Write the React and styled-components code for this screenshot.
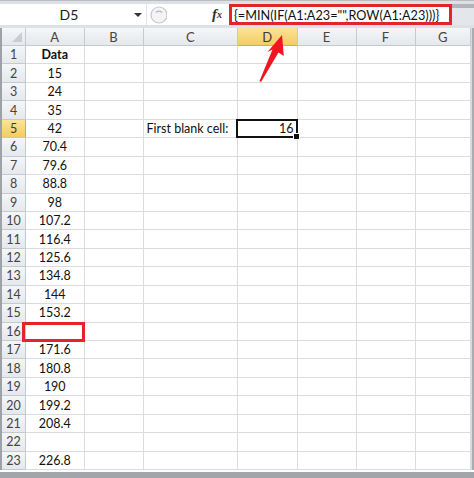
import React from 'react';
import styled, { createGlobalStyle, css } from 'styled-components';

const GlobalStyle = createGlobalStyle`
  body {
    margin: 0;
    background: #ffffff;
    font-family: "Lato", "Liberation Sans", sans-serif;
  }
`;

const COLS = [
  { key: 'A', w: 58.5 },
  { key: 'B', w: 59 },
  { key: 'C', w: 94.5 },
  { key: 'D', w: 59.5 },
  { key: 'E', w: 59 },
  { key: 'F', w: 59 },
  { key: 'G', w: 55.5 },
];

const VALUES = ['Data', '15', '24', '35', '42', '70.4', '79.6', '88.8', '98', '107.2', '116.4', '125.6',
  '134.8', '144', '153.2', '', '171.6', '180.8', '190', '199.2', '208.4', '', '226.8'];

const ROW_H = 18.45;

const Frame = styled.div`
  position: relative;
  width: 474px;
  height: 478px;
  display: flex;
  flex-direction: column;
  overflow: hidden;
  background: #ffffff;
`;

const FormulaBar = styled.div`
  height: 28px;
  display: flex;
  align-items: stretch;
  box-sizing: border-box;
  padding: 3px 0 3px 0;
  background: #dde1e6;
  border-top: 1px solid #b9bdc2;
`;

const NameBox = styled.div`
  width: 146px;
  display: flex;
  align-items: center;
  background: #ffffff;
  border-right: 1px solid #e4e6e9;
  font-size: 14px;
  color: #222;
`;

const NameText = styled.span`
  flex: 1;
  text-align: center;
  padding-left: 4px;
`;

const DropArrow = styled.span`
  width: 0;
  height: 0;
  margin-right: 4px;
  border-left: 4px solid transparent;
  border-right: 4px solid transparent;
  border-top: 4px solid #333;
`;

const Knob = styled.div`
  width: 22px;
  display: flex;
  align-items: center;
  justify-content: center;
  background: #ffffff;
`;

const FxArea = styled.div`
  flex: 0 0 60px;
  display: flex;
  align-items: center;
  justify-content: flex-end;
  padding-right: 7px;
  box-sizing: border-box;
  background: #ffffff;
  font-family: "Liberation Serif", "DejaVu Serif", serif;
  font-style: italic;
  font-weight: bold;
  font-size: 15px;
  color: #333;
  sub {
    font-size: 10px;
    vertical-align: -1px;
    margin-left: 0;
  }
`;

const FormulaInput = styled.div`
  width: 223px;
  box-sizing: border-box;
  display: flex;
  align-items: center;
  padding-left: 2px;
  background: #ffffff;
  border: 3px solid #e3242b;
  font-size: 12.7px;
  color: #111;
  white-space: nowrap;
  overflow: hidden;
`;

const BarRest = styled.div`
  flex: 1;
  background: linear-gradient(#b1b4b8 0 4px, #e4e6e9 4px);
`;

const Sheet = styled.div`
  display: flex;
  border-left: 2px solid #9ea2a7;
`;

const Grid = styled.div`
  display: flex;
  flex-direction: column;
`;

const RightEdge = styled.div`
  flex: 1;
  background: #a9acb0;
  border-left: 1px solid #d7d9dc;
`;

const BottomEdge = styled.div`
  flex: 1;
  border-top: 2px solid #ffffff;
  background: #a2a5a9;
`;

const Row = styled.div`
  display: flex;
  height: ${p => p.$h}px;
`;

const headerFill = css`
  background: ${p => p.$active
    ? 'linear-gradient(#fbe39a, #f4cc62)'
    : 'linear-gradient(#f4f6f8, #e5e8ec)'};
  color: ${p => p.$active ? '#3a3a3a' : '#444'};
`;

const Corner = styled.div`
  position: relative;
  width: 24px;
  box-sizing: border-box;
  background: linear-gradient(#f4f6f8, #e5e8ec);
  border-right: 1px solid #c6cacf;
  border-bottom: 1px solid #c6cacf;
  &::after {
    content: '';
    position: absolute;
    right: 3px;
    bottom: 3px;
    border-left: 10px solid transparent;
    border-bottom: 10px solid #c9cdd2;
  }
`;

const ColHead = styled.div`
  width: ${p => p.$w}px;
  box-sizing: border-box;
  display: flex;
  align-items: center;
  justify-content: center;
  font-size: 13px;
  border-right: 1px solid #c6cacf;
  border-bottom: 1px solid ${p => p.$active ? '#e2a93b' : '#c6cacf'};
  ${headerFill}
`;

const RowHead = styled.div`
  width: 24px;
  box-sizing: border-box;
  display: flex;
  align-items: center;
  justify-content: center;
  font-size: 12.5px;
  border-right: 1px solid ${p => p.$active ? '#e2a93b' : '#c6cacf'};
  border-bottom: 1px solid #c6cacf;
  ${headerFill}
`;

const Cell = styled.div`
  position: relative;
  width: ${p => p.$w}px;
  box-sizing: border-box;
  display: flex;
  align-items: center;
  justify-content: ${p => p.$align};
  padding: 0 3px;
  font-size: 12.5px;
  font-weight: ${p => p.$bold ? 700 : 400};
  color: #111;
  white-space: nowrap;
  border-right: 1px solid #dadcdf;
  border-bottom: 1px solid #dadcdf;

  ${p => p.$mark === 'select' && css`
    &::after {
      content: '';
      position: absolute;
      inset: -1px -1px -1px -2px;
      border: 2px solid #111;
      z-index: 2;
    }
    &::before {
      content: '';
      position: absolute;
      right: -3px;
      bottom: -3px;
      width: 5px;
      height: 5px;
      background: #111;
      border: 1px solid #fff;
      z-index: 3;
    }
  `}

  ${p => p.$mark === 'red' && css`
    &::after {
      content: '';
      position: absolute;
      inset: -1px -1px -2px -4px;
      border: 3px solid #e3242b;
      z-index: 2;
    }
  `}
`;

const ArrowLayer = styled.svg`
  position: absolute;
  left: 250px;
  top: 28px;
  width: 50px;
  height: 60px;
  z-index: 5;
`;

function cellFor(row, col) {
  if (col === 'A') {
    return {
      text: VALUES[row - 1],
      align: 'center',
      bold: row === 1,
      mark: row === 16 ? 'red' : undefined,
    };
  }
  if (row === 5 && col === 'C') return { text: 'First blank cell:', align: 'flex-start' };
  if (row === 5 && col === 'D') return { text: '16', align: 'flex-end', mark: 'select' };
  return { text: '', align: 'center' };
}

export default function App() {
  const rows = Array.from({ length: 23 }, (_, i) => i + 1);
  return (
    <Frame>
      <GlobalStyle />
      <FormulaBar>
        <NameBox>
          <NameText>D5</NameText>
          <DropArrow />
        </NameBox>
        <Knob>
          <svg width="18" height="20" viewBox="0 0 18 20">
            <circle cx="10" cy="10" r="8" fill="#f3f4f6" stroke="#c4c8cd" strokeWidth="1.2" />
            <path d="M7 7.5 A4 4 0 0 1 13 7.5" fill="none" stroke="#b0b4ba" strokeWidth="1.4" />
          </svg>
        </Knob>
        <FxArea>f<sub>x</sub></FxArea>
        <FormulaInput>{'{=MIN(IF(A1:A23="",ROW(A1:A23)))}'}</FormulaInput>
        <BarRest />
      </FormulaBar>

      <Sheet>
        <Grid>
          <Row $h={18}>
            <Corner />
            {COLS.map(c => (
              <ColHead key={c.key} $w={c.w} $active={c.key === 'D'}>{c.key}</ColHead>
            ))}
          </Row>
          {rows.map(r => (
            <Row key={r} $h={ROW_H}>
              <RowHead $active={r === 5}>{r}</RowHead>
              {COLS.map(c => {
                const cell = cellFor(r, c.key);
                return (
                  <Cell key={c.key} $w={c.w} $align={cell.align} $bold={cell.bold} $mark={cell.mark}>
                    {cell.text}
                  </Cell>
                );
              })}
            </Row>
          ))}
        </Grid>
        <RightEdge />
      </Sheet>
      <BottomEdge />

      <ArrowLayer viewBox="0 0 50 60">
        <polygon
          points="32,7 33.8,28 28.5,24.5 11,54 9.5,53 22.5,21.5 17.5,24"
          fill="#f2141e"
        />
      </ArrowLayer>
    </Frame>
  );
}
